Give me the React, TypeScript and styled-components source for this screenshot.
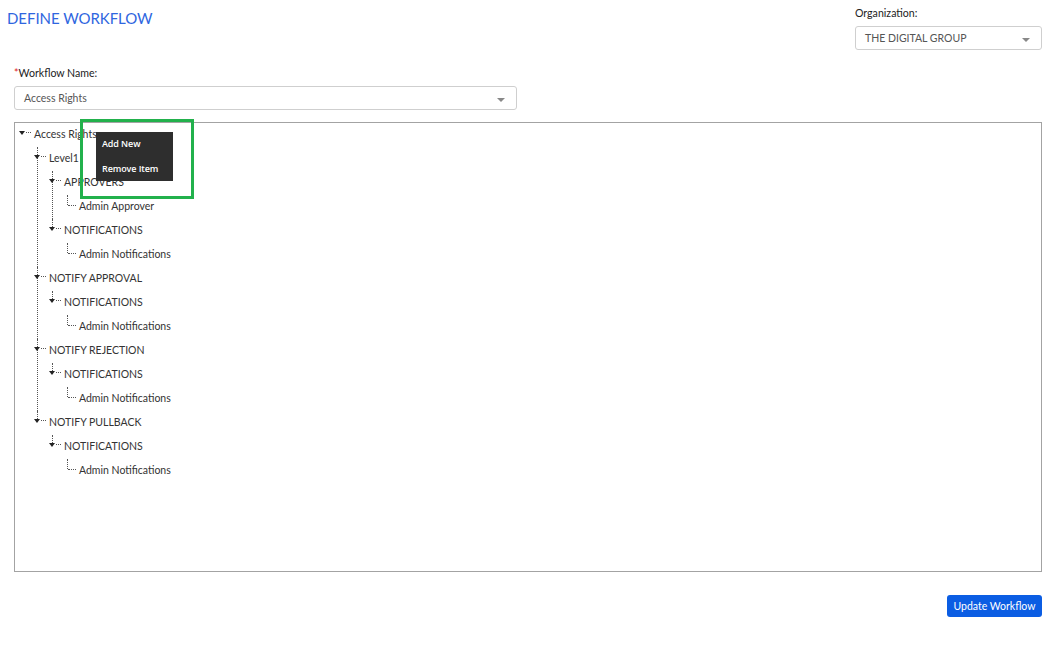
import React from "react";
import styled, { createGlobalStyle } from "styled-components";

const GlobalStyle = createGlobalStyle`
  html, body { margin: 0; padding: 0; background: #fff; }
  body { font-family: Lato, "Open Sans", Arial, sans-serif; color: #333; }
  * { box-sizing: border-box; }
`;

const Page = styled.div`
  width: 1057px;
  height: 652px;
  padding: 0 15px 0 14px;
  display: flex;
  flex-direction: column;
`;

const Header = styled.div`
  display: flex;
  justify-content: space-between;
  align-items: flex-start;
  margin-left: -7px;
  padding-top: 6px;
`;

const Title = styled.h1`
  margin: 2px 0 0;
  font-size: 15px;
  line-height: 20px;
  font-weight: 400;
  color: #2f66e0;
  letter-spacing: -0.05px;
`;

const OrgBlock = styled.div`
  width: 187px;
  display: flex;
  flex-direction: column;
`;

const FieldLabel = styled.label<{ $top?: number }>`
  display: block;
  font-size: 10.6px;
  line-height: 14px;
  color: #222;
  margin-top: ${(p) => p.$top ?? 0}px;
  margin-bottom: 6px;
`;

const Required = styled.span`
  color: #e02020;
`;

const Select = styled.div<{ $width: string }>`
  width: ${(p) => p.$width};
  height: 24px;
  border: 1px solid #cfcfcf;
  border-radius: 3px;
  display: flex;
  align-items: center;
  justify-content: space-between;
  padding: 0 11px 1px 9px;
  font-size: 10.5px;
  color: #555;
  background: #fff;
`;

const Caret = styled.span`
  width: 0;
  height: 0;
  border-left: 4px solid transparent;
  border-right: 4px solid transparent;
  border-top: 4px solid #888;
  margin-top: 4px;
`;

const TreePanel = styled.div`
  position: relative;
  margin-top: 12px;
  height: 450px;
  border: 1px solid #a3a3a3;
`;

const TreeList = styled.ul`
  list-style: none;
  margin: 0;
  padding: 0;
`;

const TreeItem = styled.li<{ $level: number; $last: boolean }>`
  position: relative;
  &::before {
    content: "";
    display: ${(p) => (p.$level === 0 ? "none" : "block")};
    position: absolute;
    left: ${(p) => 7 + 15 * p.$level}px;
    top: 0;
    height: ${(p) => (p.$last ? "10px" : "100%")};
    border-left: 1px dotted #555;
  }
`;

const Row = styled.div<{ $level: number }>`
  display: flex;
  align-items: center;
  height: 24px;
  padding-left: ${(p) => 4 + 15 * p.$level}px;
  font-size: 10.5px;
  color: #333;
`;

const Toggle = styled.span`
  position: relative;
  width: 15px;
  height: 24px;
  flex: none;
  &::before {
    content: "";
    position: absolute;
    left: 0;
    top: 8px;
    border-left: 3px solid transparent;
    border-right: 3px solid transparent;
    border-top: 4px solid #222;
  }
  &::after {
    content: "";
    position: absolute;
    left: 7px;
    width: 5px;
    top: 9px;
    border-top: 1px dotted #555;
  }
`;

const Leader = styled.span`
  position: relative;
  width: 15px;
  height: 24px;
  flex: none;
  &::after {
    content: "";
    position: absolute;
    left: 4px;
    width: 8px;
    top: 10px;
    border-top: 1px dotted #555;
  }
`;

const Label = styled.span`
  white-space: nowrap;
  margin-top: -3px;
`;

const Highlight = styled.div`
  position: absolute;
  left: 65px;
  top: -4px;
  width: 114px;
  height: 80px;
  border: 3px solid #22b14c;
  pointer-events: none;
`;

const ContextMenu = styled.div`
  position: absolute;
  left: 81px;
  top: 9px;
  width: 77px;
  height: 49px;
  background: #2e2e2e;
  display: flex;
  flex-direction: column;
  padding: 5px 0 0 6px;
  gap: 11px;
`;

const MenuItem = styled.div`
  font-family: "Open Sans", "Noto Sans", sans-serif;
  font-size: 9px;
  font-weight: 600;
  line-height: 14px;
  color: #fff;
  letter-spacing: -0.1px;
`;

const Footer = styled.div`
  display: flex;
  justify-content: flex-end;
  margin-top: 23px;
`;

const Button = styled.button`
  height: 22px;
  width: 95px;
  border: none;
  border-radius: 3px;
  background: #0b5de3;
  color: #fff;
  font-family: Lato, "Open Sans", sans-serif;
  font-size: 10.5px;
  font-weight: 400;
  padding: 0 0 1px;
  cursor: pointer;
`;

type Node = { label: string; children?: Node[] };

const notif = (): Node => ({
  label: "NOTIFICATIONS",
  children: [{ label: "Admin Notifications" }],
});

const tree: Node = {
  label: "Access Rights",
  children: [
    {
      label: "Level1",
      children: [
        { label: "APPROVERS", children: [{ label: "Admin Approver" }] },
        notif(),
      ],
    },
    { label: "NOTIFY APPROVAL", children: [notif()] },
    { label: "NOTIFY REJECTION", children: [notif()] },
    { label: "NOTIFY PULLBACK", children: [notif()] },
  ],
};

function TreeNode({ node, level, last }: { node: Node; level: number; last: boolean }) {
  const hasChildren = !!node.children && node.children.length > 0;
  return (
    <TreeItem $level={level} $last={last}>
      <Row $level={level}>
        {hasChildren ? <Toggle /> : <Leader />}
        <Label>{node.label}</Label>
      </Row>
      {hasChildren && (
        <TreeList>
          {node.children!.map((c, i) => (
            <TreeNode
              key={i}
              node={c}
              level={level + 1}
              last={i === node.children!.length - 1}
            />
          ))}
        </TreeList>
      )}
    </TreeItem>
  );
}

export default function App() {
  return (
    <>
      <GlobalStyle />
      <Page>
        <Header>
          <Title>DEFINE WORKFLOW</Title>
          <OrgBlock>
            <FieldLabel>Organization:</FieldLabel>
            <Select $width="187px">
              <span>THE DIGITAL GROUP</span>
              <Caret />
            </Select>
          </OrgBlock>
        </Header>
        <FieldLabel $top={16}>
          <Required>*</Required>Workflow Name:
        </FieldLabel>
        <Select $width="503px">
          <span>Access Rights</span>
          <Caret />
        </Select>
        <TreePanel>
          <TreeList>
            <TreeNode node={tree} level={0} last />
          </TreeList>
          <Highlight />
          <ContextMenu>
            <MenuItem>Add New</MenuItem>
            <MenuItem>Remove Item</MenuItem>
          </ContextMenu>
        </TreePanel>
        <Footer>
          <Button>Update Workflow</Button>
        </Footer>
      </Page>
    </>
  );
}
